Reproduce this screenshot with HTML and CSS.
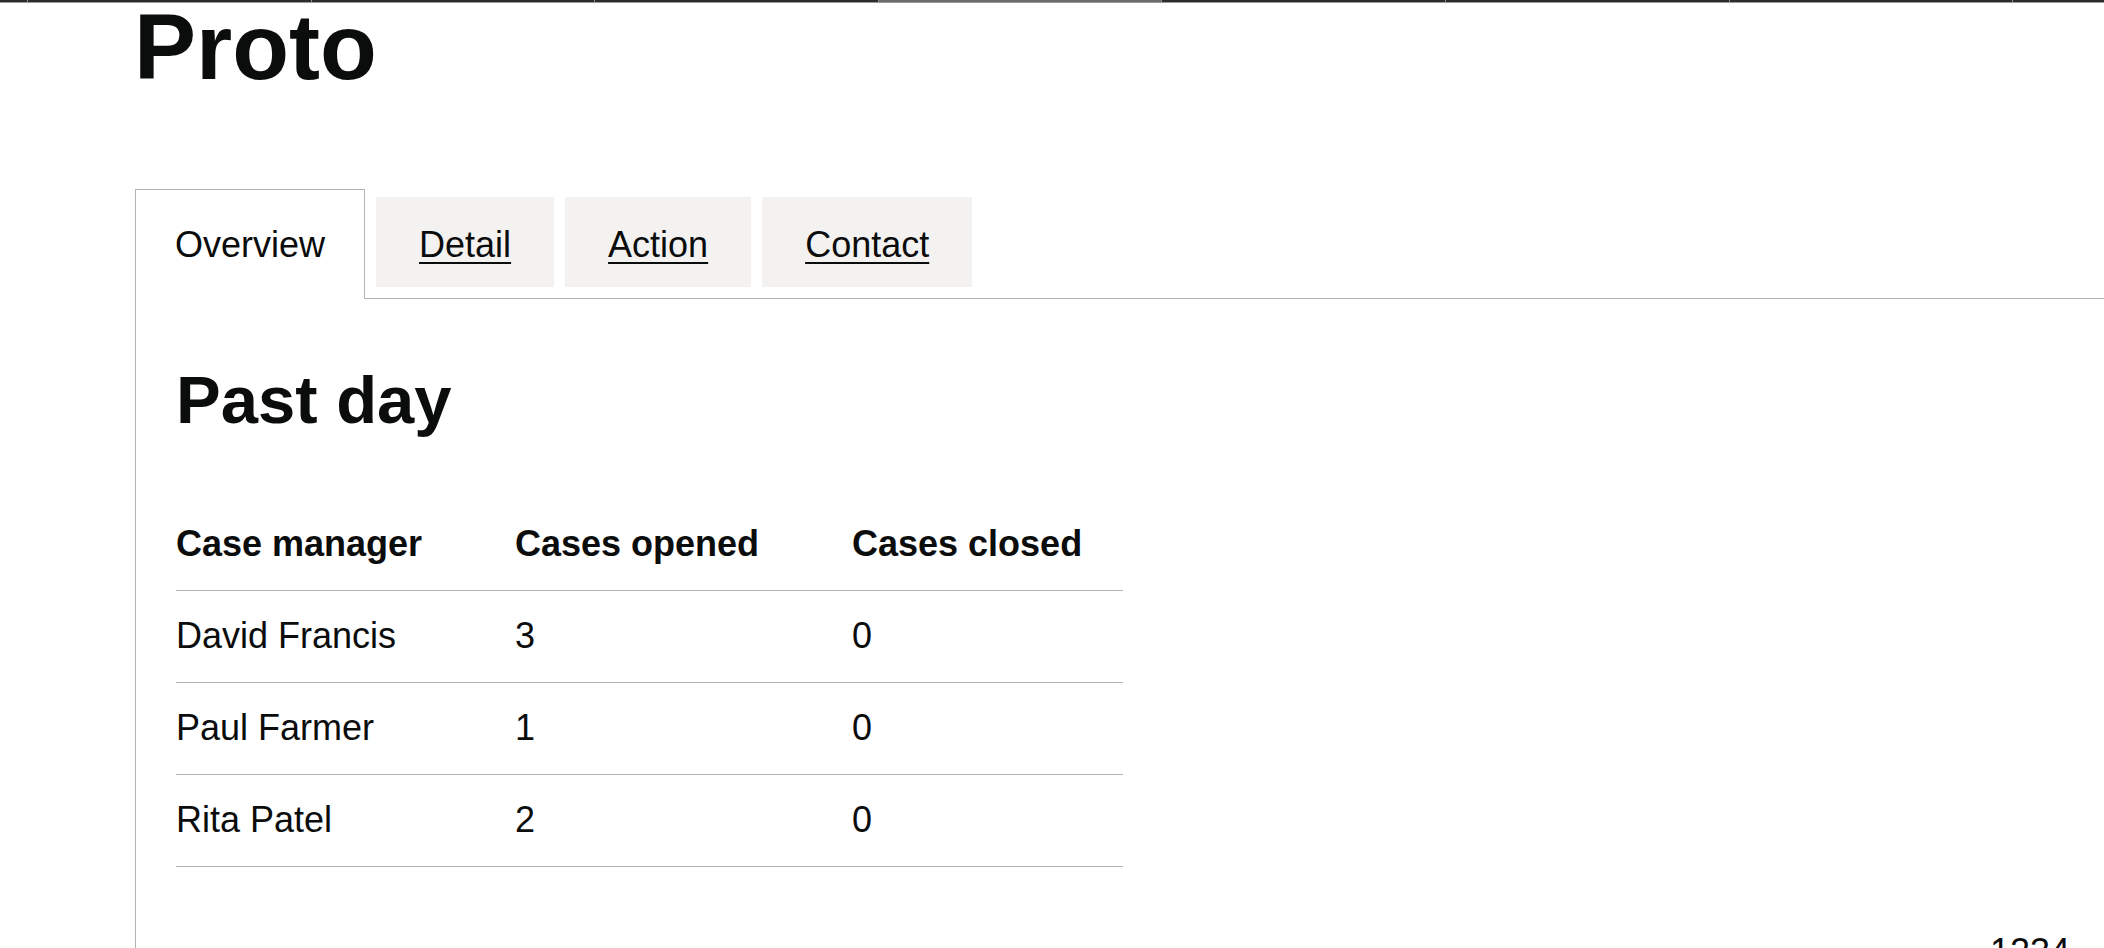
FILE: index.html
```html
<!DOCTYPE html>
<html lang="en">
<head>
<meta charset="utf-8">
<title>Proto</title>
<link rel="stylesheet" href="styles.css">
</head>
<body>
<div class="topbar">
  <span class="seg seg-first"></span>
  <span class="seg"></span>
  <span class="seg"></span>
  <span class="seg"></span>
  <span class="seg seg-active"></span>
  <span class="seg"></span>
  <span class="seg"></span>
  <span class="seg"></span>
  <span class="seg seg-last"></span>
</div>
<main class="page">
  <h1 class="title">Proto</h1>
  <div class="tabs">
    <ul class="tabs-list">
      <li class="tab tab-selected"><a class="tab-link" href="#overview">Overview</a></li>
      <li class="tab"><a class="tab-link" href="#detail">Detail</a></li>
      <li class="tab"><a class="tab-link" href="#action">Action</a></li>
      <li class="tab"><a class="tab-link" href="#contact">Contact</a></li>
    </ul>
    <section class="panel" id="overview">
      <h2 class="panel-title">Past day</h2>
      <table class="table">
        <colgroup>
          <col class="col-1">
          <col class="col-2">
          <col class="col-3">
        </colgroup>
        <thead>
          <tr>
            <th>Case manager</th>
            <th>Cases opened</th>
            <th>Cases closed</th>
          </tr>
        </thead>
        <tbody>
          <tr><td>David Francis</td><td>3</td><td>0</td></tr>
          <tr><td>Paul Farmer</td><td>1</td><td>0</td></tr>
          <tr><td>Rita Patel</td><td>2</td><td>0</td></tr>
        </tbody>
      </table>
      <p class="count">1234</p>
    </section>
  </div>
</main>
</body>
</html>
```
FILE: styles.css
```css
* { box-sizing: border-box; }

html, body {
  margin: 0;
  padding: 0;
  background: #ffffff;
}

body {
  font-family: "Liberation Sans", Arial, sans-serif;
  color: #0b0c0c;
  overflow: hidden;
}

.topbar {
  display: flex;
  height: 3px;
  background: #2c2c2c;
  border-bottom: 1px solid #9a9a9a;
}

.seg {
  flex: 0 0 283.6px;
  border-left: 1px solid #8a8a8a;
}

.seg-first {
  flex-basis: 27px;
  border-left: 0;
}

.seg-active { background: #6b6b6b; }

.seg-last { flex: 1 1 auto; }

.page {
  margin-left: 135px;
}

.title {
  margin: 0 0 106px -1px;
  font-size: 93px;
  line-height: 88px;
  font-weight: 700;
}

.tabs-list {
  display: flex;
  align-items: flex-start;
  gap: 11px;
  margin: 0;
  padding: 0;
  list-style: none;
  border-bottom: 1px solid #b1b4b6;
}

.tab {
  margin: 0 0 11px;
  padding: 24px 43px 18px;
  background: #f3f2f1;
  font-size: 36px;
  line-height: 48px;
}

.tab-selected {
  margin: -8px 0 -1px;
  padding: 31px 39px 30px;
  background: #ffffff;
  border: 1px solid #b1b4b6;
  border-bottom: 0;
}

.tab-link {
  color: #0b0c0c;
  text-decoration: underline;
  text-decoration-thickness: 2px;
  text-underline-offset: 5px;
}

.tab-selected .tab-link {
  text-decoration: none;
}

.panel {
  border-left: 1px solid #b1b4b6;
  padding: 64px 34px 0 40px;
}

.panel-title {
  margin: 0 0 62px;
  font-size: 67px;
  line-height: 74px;
  font-weight: 700;
}

.table {
  width: 947px;
  border-collapse: collapse;
  table-layout: fixed;
  font-size: 36px;
}

.col-1 { width: 339px; }
.col-2 { width: 337px; }
.col-3 { width: 271px; }

.table th,
.table td {
  text-align: left;
  padding: 20px 20px 21px 0;
  line-height: 50px;
  border-bottom: 1px solid #b1b4b6;
  vertical-align: top;
}

.table th { font-weight: 700; }
.table td { font-weight: 400; }

.count {
  margin: 64px 0 0;
  text-align: right;
  font-size: 36px;
  line-height: normal;
}
```
